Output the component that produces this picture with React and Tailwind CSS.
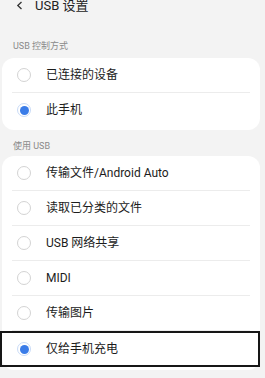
import { useState } from "react";

const controlOptions = ["已连接的设备", "此手机"];
const usbOptions = [
  "传输文件/Android Auto",
  "读取已分类的文件",
  "USB 网络共享",
  "MIDI",
  "传输图片",
  "仅给手机充电",
];

function Radio({ checked }) {
  if (checked) {
    return (
      <span className="flex h-[14px] w-[14px] items-center justify-center rounded-full border-[1.5px] border-[#c9dbf7] bg-white">
        <span className="h-[9px] w-[9px] rounded-full bg-[#3a7ce8]" />
      </span>
    );
  }
  return <span className="h-[14px] w-[14px] rounded-full border-[1.5px] border-[#d3d3d3] bg-white" />;
}

function Row({ label, checked, focused, onClick }) {
  return (
    <div
      onClick={onClick}
      className={
        focused
          ? "ml-[-2px] flex h-[36px] items-center border-2 border-[#161616] pl-[15px]"
          : "flex h-[34px] items-center pl-[15px]"
      }
    >
      <Radio checked={checked} />
      <span className="ml-[15px] text-[12px] leading-none text-[#1c1c1c]">{label}</span>
    </div>
  );
}

function Card({ options, selected, setSelected, focusedIndex }) {
  return (
    <div className="ml-[2px] mr-[5px] rounded-[12px] bg-white pb-[3px]">
      {options.map((label, i) => (
        <div key={label}>
          <Row
            label={label}
            checked={selected === i}
            focused={focusedIndex === i}
            onClick={() => setSelected(i)}
          />
          {i < options.length - 1 && (
            <div className="mx-[10px] h-px bg-[#ececec]" />
          )}
        </div>
      ))}
    </div>
  );
}

export default function App() {
  const [control, setControl] = useState(1);
  const [usb, setUsb] = useState(5);

  return (
    <main
      className="h-[378px] w-[265px] overflow-hidden bg-[#f3f3f3]"
      style={{ fontFamily: "Roboto, 'Noto Sans CJK SC', sans-serif" }}
    >
      <div className="mt-[-3px] flex h-[16px] items-center pl-[16px]">
        <svg width="7" height="9" viewBox="0 0 7 9" fill="none">
          <path d="M5.5 1 L1.8 4.5 L5.5 8" stroke="#333" strokeWidth="1.3" />
        </svg>
        <span className="ml-[12px] text-[13px] leading-none text-[#222]">USB 设置</span>
      </div>

      <p className="mt-[26px] h-[14px] pl-[13px] text-[9px] leading-[14px] text-[#8a8a8a]">
        USB 控制方式
      </p>
      <div className="mt-[5px]">
        <Card options={controlOptions} selected={control} setSelected={setControl} />
      </div>

      <p className="mt-[9px] h-[14px] pl-[13px] text-[9px] leading-[14px] text-[#8a8a8a]">
        使用 USB
      </p>
      <div className="mt-[3px]">
        <Card options={usbOptions} selected={usb} setSelected={setUsb} focusedIndex={5} />
      </div>
    </main>
  );
}
